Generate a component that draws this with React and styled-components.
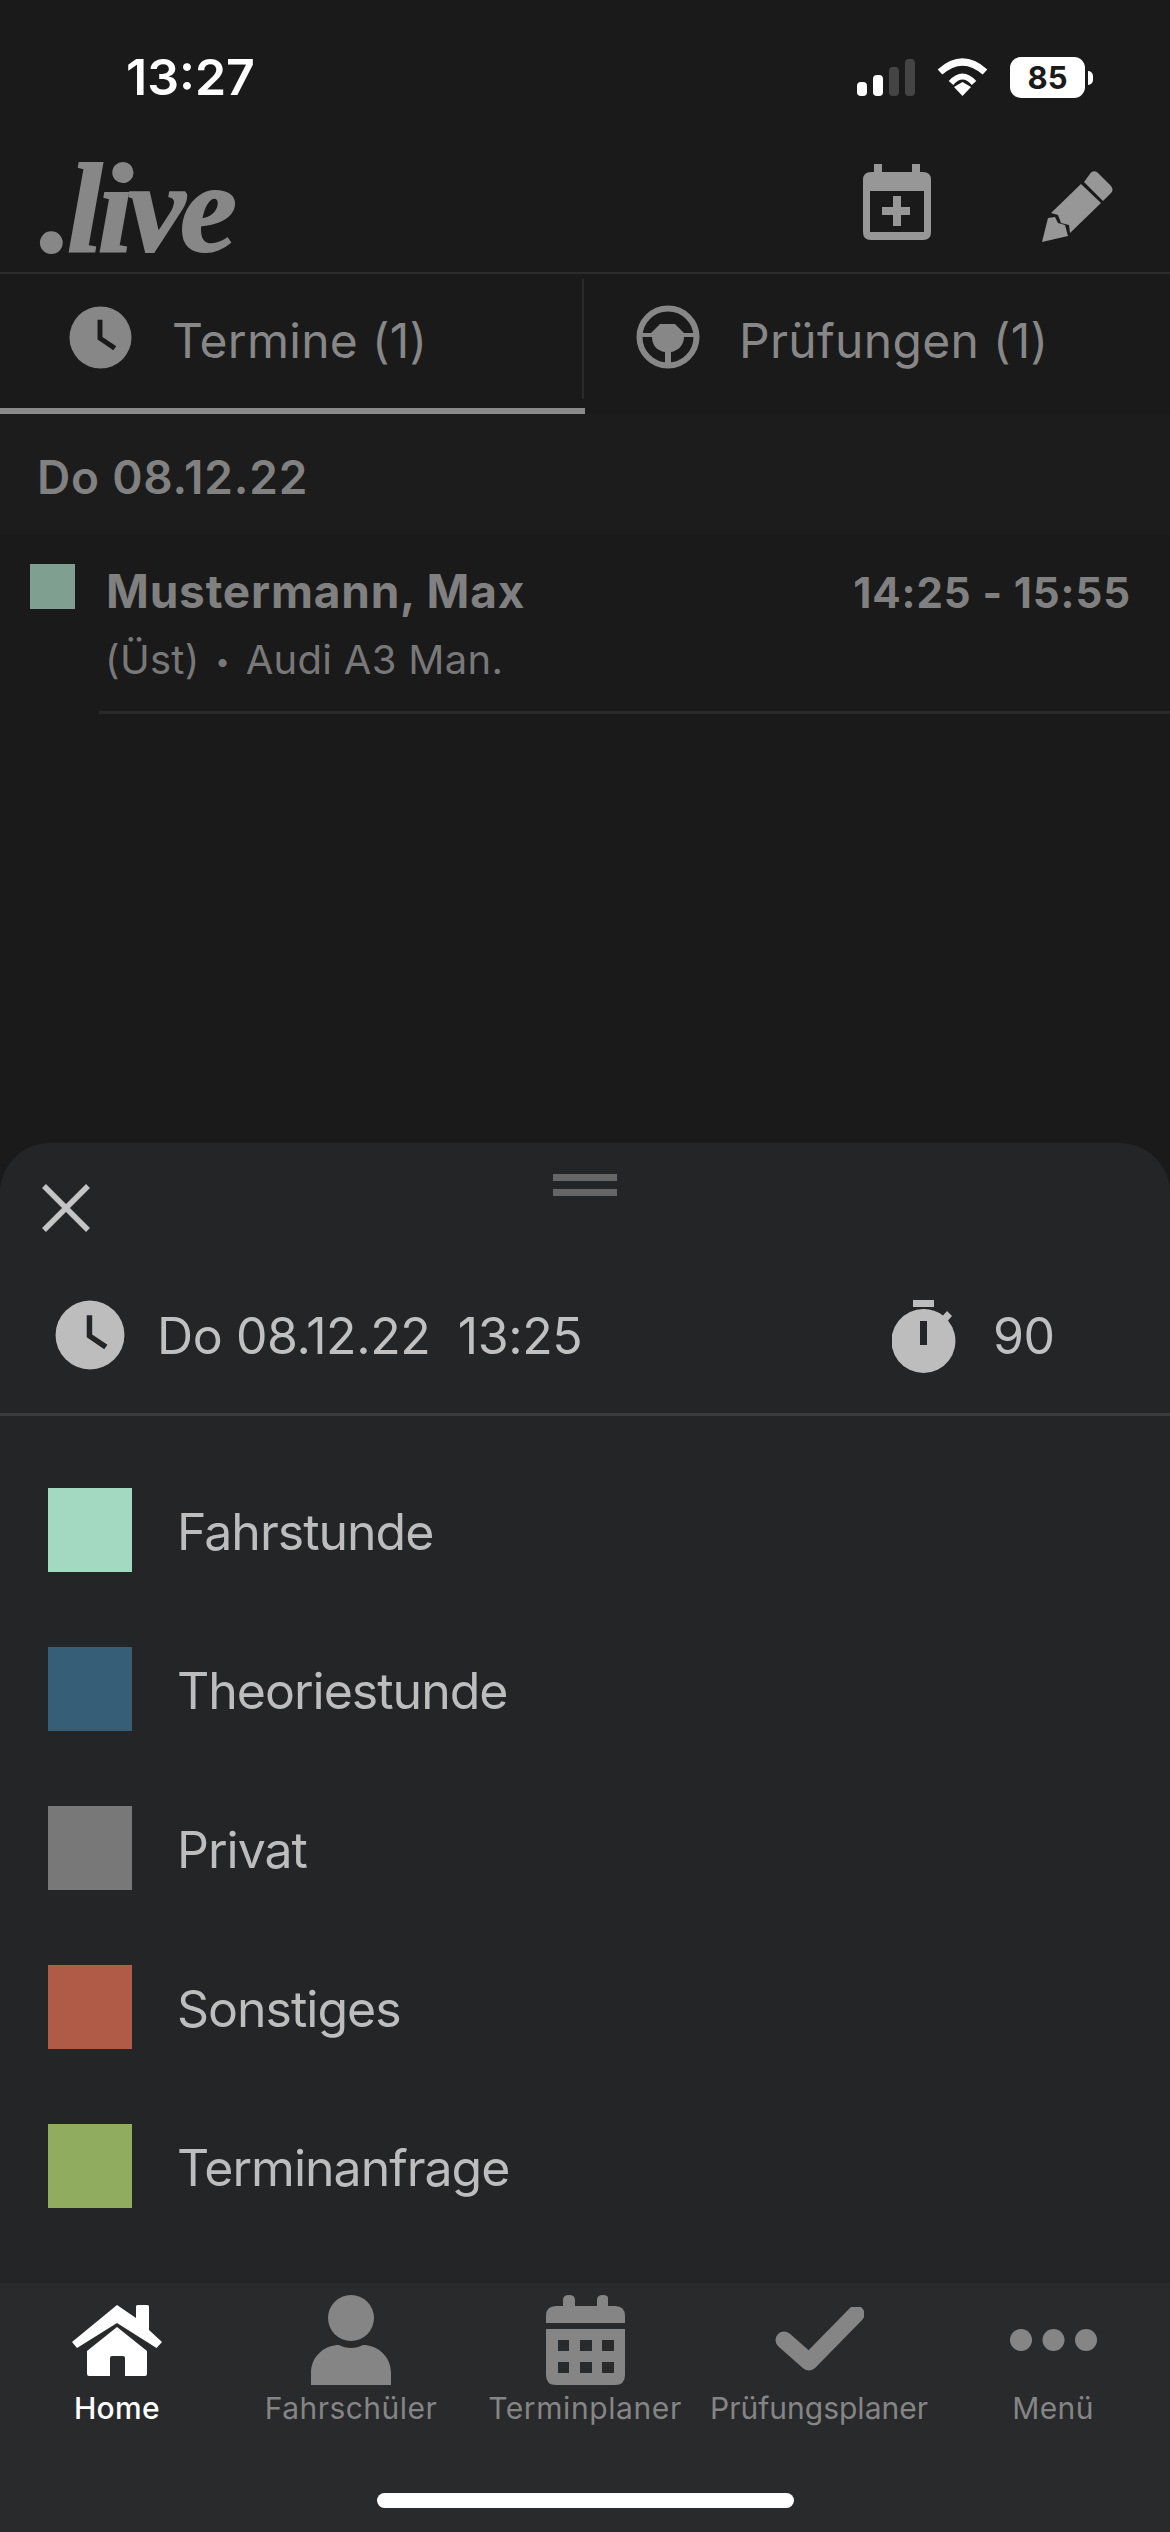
import React from "react";
import styled, { createGlobalStyle } from "styled-components";

const GlobalStyle = createGlobalStyle`
  html, body {
    margin: 0;
    padding: 0;
    background: #1a1a1a;
  }
  * {
    box-sizing: border-box;
  }
`;

const Screen = styled.div`
  width: 1170px;
  height: 2532px;
  display: flex;
  flex-direction: column;
  overflow: hidden;
  background: #1a1a1a;
  font-family: Inter, "Liberation Sans", sans-serif;
`;

const StatusBar = styled.div`
  height: 130px;
  flex: none;
  display: flex;
  justify-content: space-between;
  padding: 50px 85px 0 126px;
  color: #fff;
`;

const Clock = styled.div`
  font-size: 50px;
  line-height: 54px;
  font-weight: 600;
  letter-spacing: 0;
`;

const StatusIcons = styled.div`
  display: flex;
  align-items: flex-start;
  gap: 22px;
  padding-top: 8px;
`;

const Signal = styled.div`
  display: flex;
  align-items: flex-end;
  gap: 6px;
  height: 38px;
`;

const SignalBar = styled.div`
  width: 10px;
  height: ${(p) => p.$h}px;
  border-radius: 4px;
  background: ${(p) => (p.$on ? "#fff" : "#444")};
`;

const Battery = styled.div`
  position: relative;
  width: 75px;
  height: 41px;
  margin-top: -1px;
  border-radius: 11px;
  background: #fff;
  color: #1a1a1a;
  font-size: 31px;
  line-height: 41px;
  font-weight: 700;
  text-align: center;
  &::after {
    content: "";
    position: absolute;
    right: -8px;
    top: 14px;
    width: 5px;
    height: 14px;
    border-radius: 0 6px 6px 0;
    background: #fff;
  }
`;

const Header = styled.div`
  height: 144px;
  flex: none;
  display: flex;
  align-items: flex-start;
  border-bottom: 2px solid #2c2c2c;
  padding: 34px 57px 0 40px;
`;

const Logo = styled.div`
  flex: 1;
  font-family: "Liberation Serif", serif;
  font-size: 128px;
  line-height: 88px;
  font-weight: 700;
  font-style: italic;
  letter-spacing: -5px;
  color: #878787;
  -webkit-text-stroke: 2px #878787;
`;

const HeaderIcon = styled.svg`
  display: block;
  fill: #979797;
  margin-left: ${(p) => p.$gap}px;
  margin-top: ${(p) => p.$top}px;
`;

const Tabs = styled.div`
  height: 140px;
  flex: none;
  display: flex;
`;

const Tab = styled.div`
  width: 585px;
  display: flex;
  align-items: center;
  gap: ${(p) => p.$gap}px;
  padding: 0 0 8px ${(p) => p.$left}px;
  border-bottom: 6px solid ${(p) => (p.$active ? "#8a8a8a" : "transparent")};
  color: #878787;
  font-size: 48px;
  letter-spacing: 0.3px;
  position: relative;
  &:first-child::after {
    content: "";
    position: absolute;
    right: 1px;
    top: 5px;
    height: 120px;
    width: 2px;
    background: #2a2a2a;
  }
`;

const TabLabel = styled.span`
  padding-top: 6px;
`;

const Glyph = styled.svg`
  flex: none;
  display: block;
  fill: ${(p) => p.$fill};
`;

const SectionHead = styled.div`
  height: 120px;
  flex: none;
  padding: 35px 0 0 37px;
  background: #1c1c1c;
  color: #818181;
  font-size: 46px;
  line-height: 56px;
  font-weight: 600;
  letter-spacing: 0.8px;
`;

const Lesson = styled.div`
  flex: none;
  display: flex;
  align-items: flex-start;
  padding: 30px 0 0 30px;
`;

const LessonSwatch = styled.div`
  width: 45px;
  height: 45px;
  flex: none;
  background: #7f9f90;
`;

const LessonBody = styled.div`
  flex: 1;
  margin-left: 31px;
  padding-right: 39px;
`;

const LessonTop = styled.div`
  display: flex;
  justify-content: space-between;
  align-items: baseline;
  margin-top: -1px;
  font-weight: 700;
  color: #808080;
`;

const Name = styled.div`
  font-size: 46px;
  line-height: 56px;
  letter-spacing: 0.8px;
`;

const Time = styled.div`
  font-size: 42px;
  line-height: 56px;
  letter-spacing: 0.9px;
`;

const Meta = styled.div`
  margin: 13px 0 0 -1px;
  font-size: 40px;
  line-height: 52px;
  letter-spacing: 0.3px;
  color: #787878;
`;

const MetaDot = styled.span`
  font-size: 26px;
  vertical-align: 3px;
  margin: 0 4px;
`;

const Sep = styled.div`
  height: 3px;
  margin: 23px 0 0 99px;
  background: #2a2a2a;
`;

const Spacer = styled.div`
  flex: 1;
`;

const Sheet = styled.div`
  height: 1140px;
  flex: none;
  position: relative;
  background: #242527;
  border-radius: 50px 50px 0 0;
  color: #bdbdbd;
`;

const Handle = styled.div`
  position: absolute;
  left: 553px;
  top: 31px;
  width: 64px;
  height: 22px;
  border-top: 7px solid #666;
  border-bottom: 7px solid #666;
`;

const SheetTop = styled.div`
  padding: 41px 0 0 42px;
  height: 157px;
`;

const CloseIcon = styled.svg`
  display: block;
  stroke: #c4c4c4;
  stroke-width: 5.5;
`;

const WhenRow = styled.div`
  height: 116px;
  display: flex;
  align-items: flex-start;
  padding-left: 55px;
  border-bottom: 3px solid #3a3b3d;
  font-size: 50px;
  line-height: 73px;
  color: #c0c0c0;
  letter-spacing: -0.4px;
`;

const WhenText = styled.div`
  margin-left: 32px;
  width: 735px;
  white-space: pre;
`;

const Duration = styled.div`
  margin-left: 37px;
`;

const TypeList = styled.div`
  display: flex;
  flex-direction: column;
  gap: 75px;
  padding: 72px 0 0 48px;
`;

const TypeRow = styled.div`
  display: flex;
  align-items: center;
  gap: 45px;
  font-size: 50px;
  letter-spacing: -1px;
  color: #bdbdbd;
`;

const TypeSwatch = styled.div`
  width: 84px;
  height: 84px;
  flex: none;
  background: ${(p) => p.$color};
`;

const TypeLabel = styled.span`
  padding-top: 3px;
`;

const NavBar = styled.div`
  height: 249px;
  flex: none;
  position: relative;
  display: grid;
  grid-template-columns: repeat(5, 234px);
  background: #292a2c;
`;

const NavItem = styled.div`
  display: flex;
  flex-direction: column;
  align-items: center;
  color: ${(p) => (p.$active ? "#fff" : "#858585")};
`;

const NavIconBox = styled.div`
  height: 107px;
  padding-top: ${(p) => p.$top}px;
`;

const NavIcon = styled.svg`
  display: block;
  fill: currentColor;
`;

const NavLabel = styled.div`
  font-size: 30px;
  line-height: 36px;
  font-weight: ${(p) => (p.$active ? 500 : 400)};
  letter-spacing: ${(p) => p.$spacing}px;
  white-space: nowrap;
`;

const HomeBar = styled.div`
  position: absolute;
  left: 377px;
  top: 210px;
  width: 417px;
  height: 15px;
  border-radius: 8px;
  background: #fff;
`;

const ClockGlyph = ({ size, fill, bg }) => (
  <Glyph width={size} height={size} viewBox="0 0 64 64" $fill={fill}>
    <circle cx="32" cy="32" r="31.5" />
    <path d="M29 14h5v17.500l14 9.500-3 4-16-11z" fill={bg} />
  </Glyph>
);

const WheelGlyph = () => (
  <Glyph width="64" height="64" viewBox="0 0 64 64" $fill="#878787">
    <circle cx="32" cy="32" r="28.500" fill="none" stroke="#878787" strokeWidth="6" />
    <path d="M24 19H39L48 28H60V32H48C48 40 42 46 35 47V60H29V47C21 46 16 40 16 32H4V28H15z" />
  </Glyph>
);

const TYPES = [
  ["Fahrstunde", "#a2d9c0"],
  ["Theoriestunde", "#365f77"],
  ["Privat", "#787878"],
  ["Sonstiges", "#b05b47"],
  ["Terminanfrage", "#90ac5e"],
];

const NAV = [
  {
    label: "Home",
    active: true,
    top: 22,
    w: 90,
    h: 71,
    spacing: 0.35,
    icon: (
      <>
        <path d="M45 0 64 13V1.500Q64 0 65.500 0H75.500Q77 0 77 1.500V25L90 37 84.500 43 45 18 5 43 0 37z" />
        <path d="M45 22 75 46V69Q75 71 73 71H53V53Q53 51 51 51H40Q38 51 38 53V71H17Q15 71 15 69V46z" />
      </>
    ),
  },
  {
    label: "Fahrschüler",
    top: 12,
    w: 80,
    h: 90,
    spacing: 0.45,
    icon: (
      <>
        <circle cx="40" cy="23" r="23" />
        <path d="M0 90V78C0 60 15 50 28 50 35 54 45 54 52 50 65 50 80 60 80 78V90z" />
      </>
    ),
  },
  {
    label: "Terminplaner",
    top: 12,
    w: 79,
    h: 90,
    spacing: 0.6,
    icon: (
      <>
        <path d="M17 5q0-5 6-5t6 5v6h22V5q0-5 6-5t5 5v6h7q10 0 10 10v7H0v-7q0-10 10-10h7z" />
        <path
          fillRule="evenodd"
          d="M0 34h79v46q0 10-10 10H10Q0 90 0 80zM12 45v11h11V45zm22 0v11h12V45zm22 0v11h12V45zM12 67v11h11V67zm22 0v11h12V67zm22 0v11h12V67z"
        />
      </>
    ),
  },
  {
    label: "Prüfungsplaner",
    top: 24,
    w: 89,
    h: 67,
    spacing: 0,
    icon: <path d="M9 33 34 55 81 7" fill="none" stroke="currentColor" strokeWidth="17" strokeLinejoin="round" strokeLinecap="round" />,
  },
  {
    label: "Menü",
    top: 46,
    w: 87,
    h: 22,
    spacing: 0.35,
    icon: (
      <>
        <circle cx="11" cy="11" r="11" />
        <circle cx="43.500" cy="11" r="11" />
        <circle cx="76" cy="11" r="11" />
      </>
    ),
  },
];

export default function App() {
  return (
    <Screen>
      <GlobalStyle />
      <StatusBar>
        <Clock>13:27</Clock>
        <StatusIcons>
          <Signal>
            <SignalBar $h={14} $on />
            <SignalBar $h={21} $on />
            <SignalBar $h={29} />
            <SignalBar $h={37} />
          </Signal>
          <svg width="51" height="38" viewBox="0 0 51 38" fill="none" stroke="#fff">
            <path d="M3 14Q25.500-6 48 14" strokeWidth="7" />
            <path d="M14 25Q25.500 12 37 25" strokeWidth="6" />
            <path d="M17 29 25.500 24 34 29 25.500 38z" fill="#fff" stroke="none" />
          </svg>
          <Battery>85</Battery>
        </StatusIcons>
      </StatusBar>

      <Header>
        <Logo>.live</Logo>
        <HeaderIcon width="68" height="76" viewBox="0 0 68 76" $top={0} $gap={0}>
          <path
            fillRule="evenodd"
            d="M11 0h8v8h30V0h8v8h3q8 0 8 8v52q0 8-8 8H8q-8 0-8-8V16q0-8 8-8h3zM7 27v41h54V27zM30 32h8v11h9v8h-9v11h-8V51H19v-8h11z"
          />
        </HeaderIcon>
        <HeaderIcon width="71" height="71" viewBox="0 0 71 71" $top={7} $gap={111}>
          <path d="M49 1.500Q53-1 56 2L69 15Q72 19 69 22L61 30 42 11z" />
          <path d="M39 13 59 32 28 62 27 54 19 52 16 44 9 42z" />
          <path d="M6 47 13 46 16 52 23 54 26 65 0 71z" />
        </HeaderIcon>
      </Header>

      <Tabs>
        <Tab $active $left={69} $gap={40}>
          <ClockGlyph size={63} fill="#878787" bg="#1a1a1a" />
          <TabLabel>Termine (1)</TabLabel>
        </Tab>
        <Tab $left={51} $gap={39}>
          <WheelGlyph />
          <TabLabel>Prüfungen (1)</TabLabel>
        </Tab>
      </Tabs>

      <SectionHead>Do 08.12.22</SectionHead>

      <Lesson>
        <LessonSwatch />
        <LessonBody>
          <LessonTop>
            <Name>Mustermann, Max</Name>
            <Time>14:25 - 15:55</Time>
          </LessonTop>
          <Meta>
            (Üst) <MetaDot>•</MetaDot> Audi A3 Man.
          </Meta>
        </LessonBody>
      </Lesson>
      <Sep />

      <Spacer />

      <Sheet>
        <Handle />
        <SheetTop>
          <CloseIcon width="48" height="48" viewBox="0 0 48 48">
            <path d="M2 2 46 46M46 2 2 46" />
          </CloseIcon>
        </SheetTop>
        <WhenRow>
          <ClockGlyph size={70} fill="#bdbdbd" bg="#242527" />
          <WhenText>Do 08.12.22  13:25</WhenText>
          <Glyph width="64" height="73" viewBox="0 0 64 73" $fill="#bdbdbd">
            <path d="M21 0h21v7H21z" />
            <path
              fillRule="evenodd"
              d="M32 9a32 32 0 0 1 19 6.500l4-4.500 5 5-4 4.500A32 32 0 1 1 32 9zM28 21v24h7V21z"
            />
          </Glyph>
          <Duration>90</Duration>
        </WhenRow>
        <TypeList>
          {TYPES.map(([label, color]) => (
            <TypeRow key={label}>
              <TypeSwatch $color={color} />
              <TypeLabel>{label}</TypeLabel>
            </TypeRow>
          ))}
        </TypeList>
      </Sheet>

      <NavBar>
        {NAV.map((item) => (
          <NavItem key={item.label} $active={item.active}>
            <NavIconBox $top={item.top}>
              <NavIcon width={item.w} height={item.h} viewBox={`0 0 ${item.w} ${item.h}`}>
                {item.icon}
              </NavIcon>
            </NavIconBox>
            <NavLabel $active={item.active} $spacing={item.spacing}>
              {item.label}
            </NavLabel>
          </NavItem>
        ))}
        <HomeBar />
      </NavBar>
    </Screen>
  );
}
